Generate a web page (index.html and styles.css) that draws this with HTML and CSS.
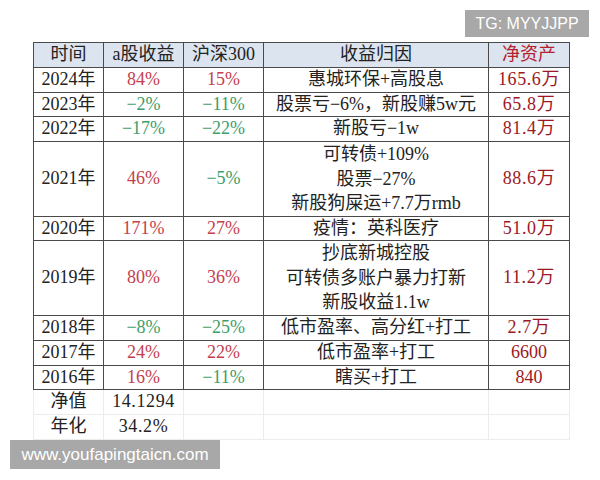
FILE: index.html
```html
<!DOCTYPE html>
<html lang="zh">
<head>
<meta charset="utf-8">
<link rel="stylesheet" href="styles.css">
</head>
<body>
<div class="page">
  <table class="sheet">
    <colgroup>
      <col class="c1"><col class="c2"><col class="c3"><col class="c4"><col class="c5">
    </colgroup>
    <thead>
      <tr class="head">
        <th>时间</th><th>a股收益</th><th>沪深300</th><th>收益归因</th><th class="nav">净资产</th>
      </tr>
    </thead>
    <tbody class="main">
      <tr><td>2024年</td><td class="up">84%</td><td class="up">15%</td><td>惠城环保+高股息</td><td class="nav num">165.6万</td></tr>
      <tr><td>2023年</td><td class="dn">−2%</td><td class="dn">−11%</td><td>股票亏−6%，新股赚5w元</td><td class="nav num">65.8万</td></tr>
      <tr><td>2022年</td><td class="dn">−17%</td><td class="dn">−22%</td><td>新股亏−1w</td><td class="nav num">81.4万</td></tr>
      <tr><td>2021年</td><td class="up">46%</td><td class="dn">−5%</td><td class="multi">可转债+109%<br>股票−27%<br>新股狗屎运+7.7万rmb</td><td class="nav num">88.6万</td></tr>
      <tr><td>2020年</td><td class="up">171%</td><td class="up">27%</td><td>疫情：英科医疗</td><td class="nav num">51.0万</td></tr>
      <tr><td>2019年</td><td class="up">80%</td><td class="up">36%</td><td class="multi">抄底新城控股<br>可转债多账户暴力打新<br>新股收益1.1w</td><td class="nav num">11.2万</td></tr>
      <tr><td>2018年</td><td class="dn">−8%</td><td class="dn">−25%</td><td>低市盈率、高分红+打工</td><td class="nav num">2.7万</td></tr>
      <tr><td>2017年</td><td class="up">24%</td><td class="up">22%</td><td>低市盈率+打工</td><td class="nav">6600</td></tr>
      <tr><td>2016年</td><td class="up">16%</td><td class="dn">−11%</td><td>瞎买+打工</td><td class="nav">840</td></tr>
    </tbody>
    <tbody class="extra">
      <tr><td>净值</td><td class="num">14.1294</td><td></td><td></td><td></td></tr>
      <tr><td>年化</td><td class="num">34.2%</td><td></td><td></td><td></td></tr>
    </tbody>
  </table>
  <div class="mark mark-tg">TG: MYYJJPP</div>
  <div class="mark mark-url">www.youfapingtaicn.com</div>
</div>
</body>
</html>
```

FILE: styles.css
```css
html, body {
  margin: 0;
  padding: 0;
  background: #ffffff;
}

.page {
  position: relative;
  width: 600px;
  height: 480px;
  padding: 42px 0 0 33px;
  box-sizing: border-box;
}

.sheet {
  border-collapse: collapse;
  table-layout: fixed;
  width: 536px;
  font-family: "Liberation Serif", "Noto Sans CJK SC", serif;
  font-size: 18px;
  color: #222222;
}

.c1 { width: 70px; }
.c2 { width: 80px; }
.c3 { width: 80px; }
.c4 { width: 225px; }
.c5 { width: 81px; }

.sheet th,
.sheet td {
  padding: 0;
  height: 23.8px;
  line-height: 23.8px;
  text-align: center;
  vertical-align: middle;
  white-space: nowrap;
  font-weight: normal;
}

.sheet td.num {
  letter-spacing: 0.6px;
}

.sheet td.multi {
  line-height: 24.5px;
}

.head th {
  background: #dce4ef;
  border: 1px solid #4a4a4a;
  color: #222222;
}

.main td {
  border: 1px solid #4a4a4a;
}

.extra td {
  border: 1px solid #ececec;
}

.extra tr:first-child td {
  border-top: 1px solid #4a4a4a;
}

.up { color: #c4404e; }
.dn { color: #3e9e6a; }
.head th.nav { color: #b4202c; }
.main td.nav { color: #9c1824; }

.mark {
  position: absolute;
  background: #a8a8a8;
  color: #ffffff;
  font-family: "Liberation Sans", Arial, sans-serif;
  display: flex;
  align-items: center;
  justify-content: center;
}

.mark-tg {
  left: 465px;
  top: 10px;
  width: 124px;
  height: 27px;
  font-size: 16px;
}

.mark-url {
  left: 10px;
  top: 440px;
  width: 210px;
  height: 29px;
  font-size: 17px;
}
```
